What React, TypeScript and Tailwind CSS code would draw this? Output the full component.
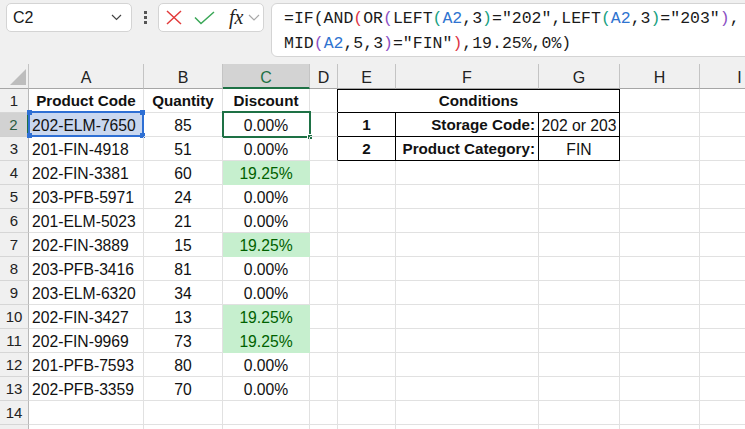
import React from 'react';

const rows: [string, string, string, boolean][] = [
  ['202-ELM-7650', '85', '0.00%', false],
  ['201-FIN-4918', '51', '0.00%', false],
  ['202-FIN-3381', '60', '19.25%', true],
  ['203-PFB-5971', '24', '0.00%', false],
  ['201-ELM-5023', '21', '0.00%', false],
  ['202-FIN-3889', '15', '19.25%', true],
  ['203-PFB-3416', '81', '0.00%', false],
  ['203-ELM-6320', '34', '0.00%', false],
  ['202-FIN-3427', '13', '19.25%', true],
  ['202-FIN-9969', '73', '19.25%', true],
  ['201-PFB-7593', '80', '0.00%', false],
  ['202-PFB-3359', '70', '0.00%', false],
];

const letters = ['A', 'B', 'C', 'D', 'E', 'F', 'G', 'H', 'I'];

function Cell({
  b = 'border-[#e1e1e1]',
  className = '',
  children,
}: {
  b?: string;
  className?: string;
  children?: React.ReactNode;
}) {
  return (
    <div className={`relative h-[24px] border-r border-b flex items-center pt-[2px] whitespace-nowrap ${b} ${className}`}>
      {children}
    </div>
  );
}

function RowHead({ n, active = false }: { n?: number; active?: boolean }) {
  return active ? (
    <div className="h-[24px] border-b border-b-[#d0d0d0] border-r-2 border-r-[#1e7145] bg-[#d2d2d2] flex items-center justify-center pt-[2px] text-[15px] text-[#2c5a3f]">
      {n}
    </div>
  ) : (
    <div className="h-[24px] border-b border-r border-b-[#d6d6d6] border-r-[#b8b8b8] bg-[#f0f0f0] flex items-center justify-center pt-[2px] text-[15px] text-[#222]">
      {n}
    </div>
  );
}

function Formula() {
  const red = 'text-[#dc3545]';
  const pur = 'text-[#8b4fc4]';
  const grn = 'text-[#16a07f]';
  const blu = 'text-[#2f74d0]';
  return (
    <div className="font-['Liberation_Mono',monospace] text-[16.5px] leading-[25px] text-[#1a1a1a]">
      <div>
        =IF(AND<span className={red}>(</span>OR<span className={pur}>(</span>LEFT<span className={grn}>(</span>
        <span className={blu}>A2</span>,3<span className={grn}>)</span>="202",LEFT<span className={grn}>(</span>
        <span className={blu}>A2</span>,3<span className={grn}>)</span>="203"<span className={pur}>)</span>,
      </div>
      <div>
        MID<span className={pur}>(</span>
        <span className={blu}>A2</span>,5,3<span className={pur}>)</span>="FIN"<span className={red}>)</span>,19.25%,0%)
      </div>
    </div>
  );
}

function TopBar() {
  return (
    <div className="h-[64px] bg-[#f0f0f0] flex items-start pt-[3px] font-['Liberation_Sans',sans-serif]">
      <div className="ml-[6px] w-[126px] h-[29px] bg-white border border-[#d4d4d4] rounded-[5px] flex items-center justify-between pl-[6px] pr-[9px]">
        <span className="text-[16px] text-[#1a1a1a]">C2</span>
        <svg width="11" height="7" viewBox="0 0 11 7">
          <path d="M1 1 L5.5 5.5 L10 1" fill="none" stroke="#444" strokeWidth="1.2" />
        </svg>
      </div>
      <div className="w-[26px] h-[29px] flex flex-col items-center justify-center gap-[2px]">
        <div className="w-[3px] h-[3px] bg-[#555]" />
        <div className="w-[3px] h-[3px] bg-[#555]" />
        <div className="w-[3px] h-[3px] bg-[#555]" />
      </div>
      <div className="w-[106px] h-[29px] bg-white border border-[#d4d4d4] rounded-[5px] flex items-center pl-[7px]">
        <svg width="16" height="15" viewBox="0 0 16 15">
          <path d="M1 1 L15 14 M15 1 L1 14" stroke="#e23b3b" strokeWidth="1.5" fill="none" />
        </svg>
        <svg width="21" height="14" viewBox="0 0 21 14" className="ml-[12px]">
          <path d="M1 6.5 L7 12.5 L20 1" stroke="#3aa757" strokeWidth="1.5" fill="none" />
        </svg>
        <span className="ml-[14px] font-['Liberation_Serif',serif] italic text-[20px] leading-none text-[#222] -mt-[2px]">
          fx
        </span>
        <svg width="12" height="7" viewBox="0 0 12 7" className="ml-[5px]">
          <path d="M1 1 L6 6 L11 1" fill="none" stroke="#a8a8a8" strokeWidth="1.2" />
        </svg>
      </div>
      <div className="ml-[7px] flex-1 -mr-[20px] h-[54px] bg-white border border-[#d4d4d4] rounded-[6px] pl-[12px] pt-[2px]">
        <Formula />
      </div>
    </div>
  );
}

export default function App() {
  const colHead = (l: string) =>
    l === 'C' ? (
      <div key={l} className="h-[25px] bg-[#d3d3d3] border-b-2 border-b-[#1e7145] border-r border-r-[#c4c4c4] flex items-center justify-center pt-[4px] text-[16px] text-[#1e7145]">
        {l}
      </div>
    ) : (
      <div key={l} className="h-[25px] border-b border-b-[#a6a6a6] border-r border-r-[#c4c4c4] flex items-center justify-center pt-[3px] text-[16px] text-[#222]">
        {l}
      </div>
    );

  return (
    <div className="w-[745px] h-[429px] overflow-hidden bg-white font-['Liberation_Sans',sans-serif] text-[#111]">
      <TopBar />
      <div className="grid grid-cols-[29px_115px_79px_87px_28px_58px_143px_81px_80px_80px]">
        {/* column headers */}
        <div className="h-[25px] bg-[#f0f0f0] border-b border-b-[#a6a6a6] border-r border-r-[#c4c4c4] flex items-end justify-end pr-[2px] pb-[3px]">
          <svg width="16" height="16" viewBox="0 0 16 16">
            <path d="M16 0 L16 16 L0 16 Z" fill="#bdbdbd" />
          </svg>
        </div>
        {letters.map((l) => (
          <div key={l} className="bg-[#f0f0f0]">
            {colHead(l)}
          </div>
        ))}

        {/* row 1 */}
        <RowHead n={1} />
        <Cell className="justify-center font-bold text-[15.2px]">Product Code</Cell>
        <Cell className="justify-center font-bold text-[15.2px]">Quantity</Cell>
        <Cell className="justify-center font-bold text-[15.2px]">Discount</Cell>
        <Cell b="border-r-black border-b-[#e1e1e1]" />
        <div className="col-span-3 h-[24px] border-r border-b border-black shadow-[inset_0_1px_0_#000] flex items-center justify-center pt-[2px] font-bold text-[15.2px]">
          Conditions
        </div>
        <Cell />
        <Cell />

        {rows.map(([code, qty, disc, hit], i) => {
          const n = i + 2;
          return (
            <React.Fragment key={n}>
              <RowHead n={n} active={n === 2} />
              {n === 2 ? (
                <Cell b="border-[#e1e1e1]" className="bg-[#c9d7ef] pl-[3px] text-[15.7px]">
                  {code}
                  <div className="absolute -left-[1px] -top-[2px] -right-[1px] -bottom-[1px] border-2 border-[#2e6fd4]">
                    <div className="absolute -left-[3px] -top-[3px] w-[5px] h-[5px] bg-[#2e6fd4]" />
                    <div className="absolute -right-[3px] -top-[3px] w-[5px] h-[5px] bg-[#2e6fd4]" />
                    <div className="absolute -left-[3px] -bottom-[3px] w-[5px] h-[5px] bg-[#2e6fd4]" />
                    <div className="absolute -right-[3px] -bottom-[3px] w-[5px] h-[5px] bg-[#2e6fd4]" />
                  </div>
                </Cell>
              ) : (
                <Cell className="pl-[3px] text-[15.7px]">{code}</Cell>
              )}
              <Cell className="justify-center text-[15.7px]">{qty}</Cell>
              {hit ? (
                <Cell b="border-[#c6efce]" className="justify-center bg-[#c6efce] text-[#006100] text-[15.7px]">
                  {disc}
                </Cell>
              ) : n === 2 ? (
                <Cell className="justify-center text-[15.7px]">
                  {disc}
                  <div className="absolute -left-[1px] -top-[2px] -right-[2px] -bottom-[2px] border-2 border-[#1e7145]">
                    <div className="absolute -right-[4px] -bottom-[4px] w-[6px] h-[6px] bg-[#1e7145] border border-white" />
                  </div>
                </Cell>
              ) : (
                <Cell className="justify-center text-[15.7px]">{disc}</Cell>
              )}
              {n === 2 || n === 3 ? (
                <>
                  <Cell b="border-r-black border-b-[#e1e1e1]" />
                  <Cell b="border-black" className="justify-center font-bold text-[15.2px]">
                    {n - 1}
                  </Cell>
                  <Cell b="border-black" className="justify-end pr-[3px] font-bold text-[15.2px]">
                    {n === 2 ? 'Storage Code:' : 'Product Category:'}
                  </Cell>
                  <Cell b="border-black" className="justify-center text-[15.7px]">
                    {n === 2 ? '202 or 203' : 'FIN'}
                  </Cell>
                </>
              ) : (
                <>
                  <Cell />
                  <Cell />
                  <Cell />
                  <Cell />
                </>
              )}
              <Cell />
              <Cell />
            </React.Fragment>
          );
        })}

        <RowHead n={14} />
        {letters.map((l) => (
          <Cell key={l} />
        ))}
        <RowHead />
        {letters.map((l) => (
          <Cell key={l} />
        ))}
      </div>
    </div>
  );
}
